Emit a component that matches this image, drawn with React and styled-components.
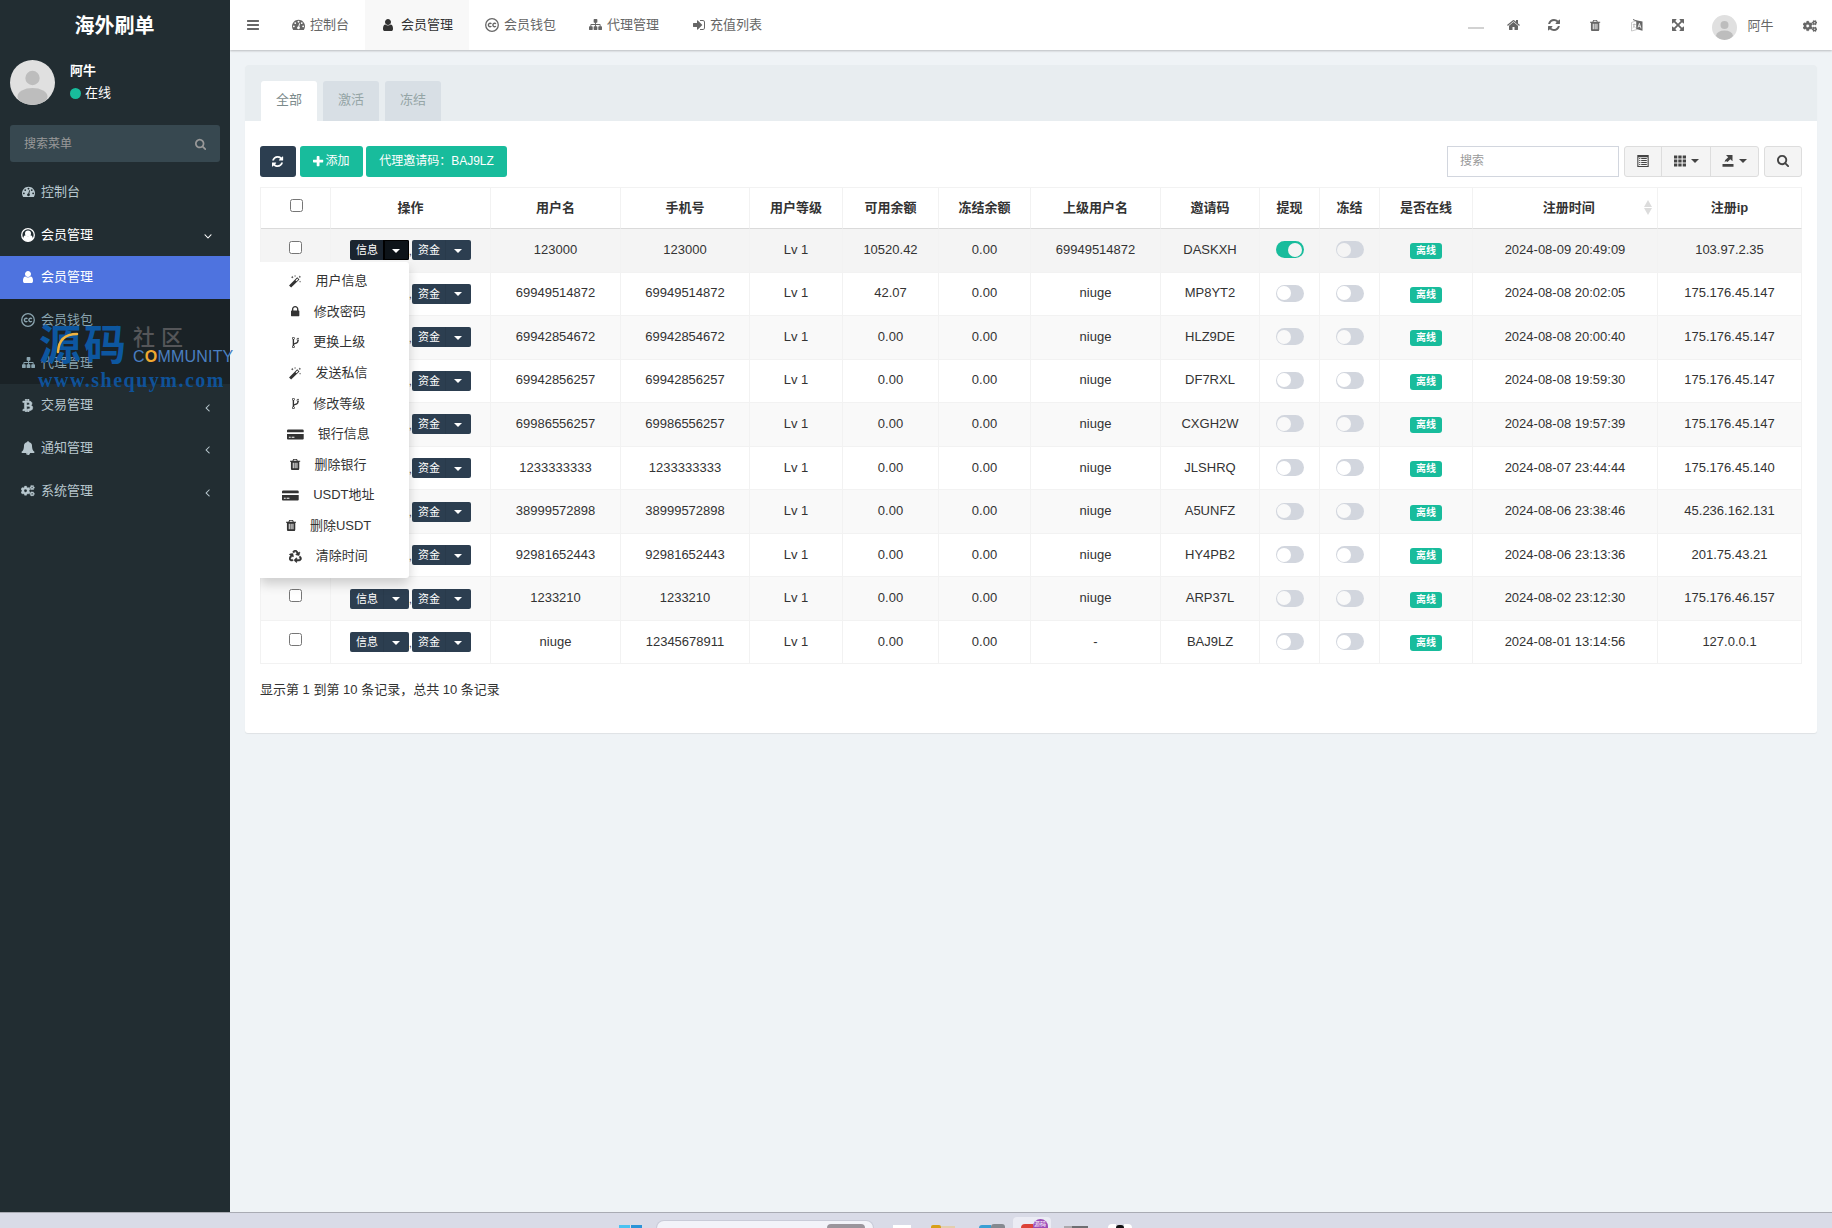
import React from 'react';
import styled, { createGlobalStyle, css } from 'styled-components';
import { FaRecycle, FaCogs, FaBtc } from 'react-icons/fa';

const Global = createGlobalStyle`
  * { box-sizing: border-box; }
  body {
    margin: 0;
    overflow: hidden;
    background: #eff3f6;
    color: #333;
    font: 13px/18px "Liberation Sans", "Noto Sans CJK SC", sans-serif;
  }
`;

/* ---------- icons ---------- */
const PATHS = {
  dashboard: [1792, 'M384 1152q0-53-37.500-90.500t-90.500-37.500-90.500 37.500-37.500 90.500 37.500 90.500 90.500 37.500 90.500-37.500 37.500-90.500zm192-448q0-53-37.500-90.500t-90.500-37.500-90.500 37.500-37.500 90.500 37.500 90.500 90.500 37.500 90.500-37.500 37.500-90.500zm428 481l101-382q6-26-7.500-48.500t-38.500-29.500-48 6.500-30 39.500l-101 382q-60 5-107 43.500t-63 98.500q-20 77 20 146t117 89 146-20 89-117q16-60-6-117t-72-91zm660-33q0-53-37.500-90.500t-90.500-37.500-90.500 37.500-37.500 90.500 37.500 90.500 90.500 37.500 90.500-37.500 37.500-90.500zm-640-640q0-53-37.500-90.500t-90.500-37.500-90.500 37.500-37.500 90.500 37.500 90.500 90.500 37.500 90.500-37.500 37.500-90.500zm448 192q0-53-37.500-90.500t-90.500-37.500-90.500 37.500-37.500 90.500 37.500 90.500 90.500 37.500 90.500-37.500 37.500-90.500zm320 448q0 261-141 483-19 29-54 29h-1402q-35 0-54-29-141-221-141-483 0-182 71-348t191-286 286-191 348-71 348 71 286 191 191 286 71 348z'],
  refresh: [1536, 'M1639 1056q0 5-1 7-64 268-268 434.500t-478 166.500q-146 0-282.500-55t-243.500-157l-129 129q-19 19-45 19t-45-19-19-45v-448q0-26 19-45t45-19h448q26 0 45 19t19 45-19 45l-137 137q71 66 161 102t187 36q134 0 250-65t186-179q11-17 53-117 8-23 30-23h192q13 0 22.500 9.500t9.500 22.500zm25-800v448q0 26-19 45t-45 19h-448q-26 0-45-19t-19-45 19-45l138-138q-148-137-349-137-134 0-250 65t-186 179q-11 17-53 117-8 23-30 23h-199q-13 0-22.500-9.500t-9.500-22.500v-7q65-268 270-434.500t480-166.500q146 0 284 55.500t245 156.500l130-129q19-19 45-19t45 19 19 45z'],
  search: [1664, 'M1216 832q0-185-131.500-316.500t-316.500-131.500-316.500 131.500-131.500 316.500 131.500 316.500 316.500 131.500 316.500-131.500 131.500-316.500zm512 832q0 52-38 90t-90 38q-54 0-90-38l-343-342q-179 124-399 124-143 0-273.500-55.500t-225-150-150-225-55.500-273.500 55.500-273.500 150-225 225-150 273.500-55.500 273.500 55.500 225 150 150 225 55.500 273.500q0 220-124 399l343 343q37 37 37 90z'],
  user: [1280, 'M1536 1399q0 109-62.500 187t-150.500 78h-854q-88 0-150.500-78t-62.500-187q0-85 8.500-160.500t31.500-152 58.500-131 94-89 134.500-34.500q131 128 313 128t313-128q76 0 134.500 34.500t94 89 58.500 131 31.500 152 8.500 160.500zm-256-887q0 159-112.500 271.500t-271.500 112.500-271.500-112.500-112.500-271.500 112.500-271.500 271.500-112.500 271.500 112.500 112.500 271.500z'],
  bars: [1536, 'M1664 1344v128q0 26-19 45t-45 19h-1408q-26 0-45-19t-19-45v-128q0-26 19-45t45-19h1408q26 0 45 19t19 45zm0-512v128q0 26-19 45t-45 19h-1408q-26 0-45-19t-19-45v-128q0-26 19-45t45-19h1408q26 0 45 19t19 45zm0-512v128q0 26-19 45t-45 19h-1408q-26 0-45-19t-19-45v-128q0-26 19-45t45-19h1408q26 0 45 19t19 45z'],
  angle: [700, 'M1203 544q0 13-10 23l-393 393 393 393q10 10 10 23t-10 23l-50 50q-10 10-23 10t-23-10l-466-466q-10-10-10-23t10-23l466-466q10-10 23-10t23 10l50 50q10 10 10 23z'],
  plus: [1408, 'M1600 736v192q0 40-28 68t-68 28h-416v416q0 40-28 68t-68 28h-192q-40 0-68-28t-28-68v-416h-416q-40 0-68-28t-28-68v-192q0-40 28-68t68-28h416v-416q0-40 28-68t68-28h192q40 0 68 28t28 68v416h416q40 0 68 28t28 68z'],
  home: [1664, 'M1472 992v480q0 26-19 45t-45 19h-384v-384h-256v384h-384q-26 0-45-19t-19-45v-480q0-1 .5-3t.5-3l575-474 575 474q1 2 1 6zm223-69l-62 74q-8 9-21 11h-3q-13 0-21-7l-692-577-692 577q-12 8-24 7-13-2-21-11l-62-74q-8-10-7-23.500t11-21.500l719-599q32-26 76-26t76 26l244 204v-195q0-14 9-23t23-9h192q14 0 23 9t9 23v408l219 182q10 8 11 21.500t-7 23.500z'],
  lock: [1152, 'M640 768h512v-192q0-106-75-181t-181-75-181 75-75 181v192zm832 96v576q0 40-28 68t-68 28h-960q-40 0-68-28t-28-68v-576q0-40 28-68t68-28h32v-192q0-184 132-316t316-132 316 132 132 316v192h32q40 0 68 28t28 68z'],
  trash: [1408, 'M704 1376v-704q0-14-9-23t-23-9h-64q-14 0-23 9t-9 23v704q0 14 9 23t23 9h64q14 0 23-9t9-23zm256 0v-704q0-14-9-23t-23-9h-64q-14 0-23 9t-9 23v704q0 14 9 23t23 9h64q14 0 23-9t9-23zm256 0v-704q0-14-9-23t-23-9h-64q-14 0-23 9t-9 23v704q0 14 9 23t23 9h64q14 0 23-9t9-23zm-544-992h448l-48-117q-7-9-17-11h-317q-10 2-17 11zm928 32v64q0 14-9 23t-23 9h-96v948q0 83-47 143.500t-113 60.500h-832q-66 0-113-58.500t-47-141.500v-952h-96q-14 0-23-9t-9-23v-64q0-14 9-23t23-9h309l70-167q15-37 54-63t79-26h320q40 0 79 26t54 63l70 167h309q14 0 23 9t9 23z'],
  expand: [1536, 'M1411 541l-355 355 355 355 144-144q29-31 70-14 39 17 39 59v448q0 26-19 45t-45 19h-448q-42 0-59-40-17-39 14-69l144-144-355-355-355 355 144 144q31 30 14 69-17 40-59 40h-448q-26 0-45-19t-19-45v-448q0-42 40-59 39-17 69 14l144 144 355-355-355-355-144 144q-19 19-45 19-12 0-24-5-40-17-40-59v-448q0-26 19-45t45-19h448q42 0 59 40 17 39-14 69l-144 144 355 355 355-355-144-144q-31-30-14-69 17-40 59-40h448q26 0 45 19t19 45v448q0 42-39 59-13 5-25 5-26 0-45-19z'],
  signin: [1536, 'M1312 896q0 26-19 45l-544 544q-19 19-45 19t-45-19-19-45v-288h-448q-26 0-45-19t-19-45v-384q0-26 19-45t45-19h448v-288q0-26 19-45t45-19 45 19l544 544q19 19 19 45zm352-352v704q0 119-84.500 203.500t-203.500 84.500h-320q-13 0-22.500-9.500t-9.500-22.500q0-4-1-20t-.5-26.500 3-23.500 10-19.500 20.500-6.500h320q66 0 113-47t47-113v-704q0-66-47-113t-113-47h-312l-11.500-1-11.500-3-8-5.500-7-9-2-13.500q0-4-1-20t-.5-26.500 3-23.500 10-19.500 20.500-6.500h320q119 0 203.500 84.500t84.500 203.500z'],
  sitemap: [1792, 'M1792 1248v320q0 40-28 68t-68 28h-320q-40 0-68-28t-28-68v-320q0-40 28-68t68-28h96v-192h-512v192h96q40 0 68 28t28 68v320q0 40-28 68t-68 28h-320q-40 0-68-28t-28-68v-320q0-40 28-68t68-28h96v-192h-512v192h96q40 0 68 28t28 68v320q0 40-28 68t-68 28h-320q-40 0-68-28t-28-68v-320q0-40 28-68t68-28h96v-192q0-52 38-90t90-38h512v-192h-96q-40 0-68-28t-28-68v-320q0-40 28-68t68-28h320q40 0 68 28t28 68v320q0 40-28 68t-68 28h-96v192h512q52 0 90 38t38 90v192h96q40 0 68 28t28 68z'],
  fork: [1024, 'M672 1472q0-40-28-68t-68-28-68 28-28 68 28 68 68 28 68-28 28-68zm0-1152q0-40-28-68t-68-28-68 28-28 68 28 68 68 28 68-28 28-68zm640 128q0-40-28-68t-68-28-68 28-28 68 28 68 68 28 68-28 28-68zm96 0q0 52-26 96.500t-70 69.500q-2 287-226 414-67 38-203 81-128 40-169.500 71t-41.500 100v26q44 25 70 69.500t26 96.500q0 80-56 136t-136 56-136-56-56-136q0-52 26-96.500t70-69.500v-820q-44-25-70-69.500t-26-96.500q0-80 56-136t136-56 136 56 56 136q0 52-26 96.500t-70 69.500v497q54-26 154-57 55-17 87.500-29.500t70.500-31 59-39.500 40.500-51 28-69.500 8.500-91.500q-44-25-70-69.500t-26-96.500q0-80 56-136t136-56 136 56 56 136z'],
  card: [2304, 'M-256 1440v-608h2304v608q0 66-47 113t-113 47h-1984q-66 0-113-47t-47-113zm640-224v128h384v-128zm-384 0v128h256v-128zm1888-1024q66 0 113 47t47 113v224h-2304v-224q0-66 47-113t113-47z'],
  bell: [1792, 'M912 1696q0-16-16-16-59 0-101.500-42.500t-42.500-101.500q0-16-16-16t-16 16q0 73 51.500 124.500t124.500 51.500q16 0 16-16zm816-288q0 52-38 90t-90 38h-448q0 106-75 181t-181 75-181-75-75-181h-448q-52 0-90-38t-38-90q50-42 91-88t85-119.500 74.500-158.500 50-206 19.500-260q0-152 117-282.500t307-158.500q-8-19-8-39 0-40 28-68t68-28 68 28 28 68q0 20-8 39 190 28 307 158.500t117 282.500q0 139 19.500 260t50 206 74.500 158.500 85 119.500 91 88z'],
};

const Svg = styled.svg`
  display: block;
  flex: none;
  fill: currentColor;
`;

function Drawn({ name, size }) {
  if (name === 'cc')
    return (
      <Svg width={size} height={size} viewBox="0 0 14 14">
        <circle cx="7" cy="7" r="6.300" fill="none" stroke="currentColor" strokeWidth="1.300" />
        <path d="M6.400 5.900A1.700 1.700 0 1 0 6.400 8.100M10.900 5.900A1.700 1.700 0 1 0 10.900 8.100" fill="none" stroke="currentColor" strokeWidth="1.400" />
      </Svg>
    );
  if (name === 'usercircle')
    return (
      <Svg width={size} height={size} viewBox="0 0 14 14">
        <circle cx="7" cy="7" r="6.300" fill="none" stroke="currentColor" strokeWidth="1.300" />
        <circle cx="7" cy="5.400" r="3" />
        <path d="M2 11q.5-3.600 2.600-3.800Q7 9.200 9.400 7.200q2.100.2 2.600 3.800Q9.800 13.400 7 13.400T2 11z" />
      </Svg>
    );
  if (name === 'magic')
    return (
      <Svg width={size * 0.93} height={size} viewBox="0 0 12 13">
        <path d="M8.200 2.300l2.200 2.200-8.300 8.100L0 10.500zM8.300 3.500L6.500 5.300l.9.900 1.800-1.800z" fillRule="evenodd" />
        <path d="M3.200.8l.4 1 1 .4-1 .4-.4 1-.4-1-1-.4 1-.4zM6 0l.3.700.7.300-.7.300L6 2l-.3-.7L5 1l.7-.3zM10.800.6l.4.900.8.400-.8.400-.4.800-.4-.8-.8-.4.8-.4zM11 5.800l.3.700.7.300-.7.300-.3.700-.3-.7-.7-.3.700-.3z" />
      </Svg>
    );
  if (name === 'language')
    return (
      <Svg width={size} height={size} viewBox="0 0 12 13">
        <path d="M1 3.500l5.500-2v9L1 12z" fill="#fff" stroke="#bbb" strokeWidth=".8" />
        <path d="M2.300 5.500h3M3.700 4.500c0 3-.6 4-1.500 4.500M3 6.500c.6 1.500 1.200 2 2.200 2.300" fill="none" stroke="#aaa" strokeWidth=".7" />
        <path d="M2.500 0l3 1.200L12 2.400v9.400L5.800 10V2.500L2.500 1z" />
        <path d="M7.500 8.500L8.900 4.400l1.600 5M8 7.300h2" fill="none" stroke="#fff" strokeWidth=".8" />
      </Svg>
    );
  if (name === 'list')
    return (
      <Svg width={size} height={size} viewBox="0 0 12 12">
        <path fillRule="evenodd" d="M.3 0h11.400v12H.3zM1.400 2.200v8.700h9.200V2.200zM2.200 3h1.100v1H2.200zM4.200 3h5.600v1H4.200zM2.200 5h1.100v1H2.200zM4.200 5h5.600v1H4.200zM2.200 7h1.100v1H2.200zM4.200 7h5.600v1H4.200zM2.200 9h1.100v1H2.200zM4.200 9h5.600v1H4.200z" />
      </Svg>
    );
  if (name === 'grid')
    return (
      <Svg width={size} height={size} viewBox="0 0 12 12">
        <path d="M0 .5h3.300v3H0zM4.300.5h3.300v3H4.300zM8.700.5H12v3H8.700zM0 4.500h3.300v3H0zM4.300 4.500h3.300v3H4.300zM8.700 4.500H12v3H8.700zM0 8.500h3.300v3H0zM4.300 8.500h3.300v3H4.300zM8.700 8.500H12v3H8.700z" />
      </Svg>
    );
  if (name === 'export')
    return (
      <Svg width={size} height={size} viewBox="0 0 12 12">
        <path d="M.5 9h11v2.800H.5zM4 0h6.500v6.300L8.300 4.200 5.500 7Q4 5.500 2.500 7.500 3 4.300 6.200 2.200z" />
      </Svg>
    );
  const [w, d] = PATHS[name];
  return (
    <Svg width={(size * w) / 1792} height={size} viewBox={`${(1792 - w) / 2} 0 ${w} 1792`}>
      <path d={d} />
    </Svg>
  );
}

const PACKED = { recycle: FaRecycle, cogs: FaCogs, btc: FaBtc };

function Icon({ name, size = 13 }) {
  const P = PACKED[name];
  return P ? <P size={size - 0.5} stroke="currentColor" strokeWidth={name === 'cogs' ? 14 : 22} /> : <Drawn name={name} size={size} />;
}

const Caret = styled.i`
  border: 4px solid transparent;
  border-top-color: currentColor;
  border-bottom: 0;
`;

function Avatar({ size }) {
  return (
    <Svg width={size} height={size} viewBox="0 0 45 45">
      <clipPath id={`round${size}`}><circle cx="22.500" cy="22.500" r="22.500" /></clipPath>
      <g clipPath={`url(#round${size})`}>
        <rect width="45" height="45" fill="#e0e0e0" />
        <circle cx="22.500" cy="18" r="7.200" fill="#bdbdbd" />
        <ellipse cx="22.500" cy="36.500" rx="15" ry="8.500" fill="#bdbdbd" />
      </g>
    </Svg>
  );
}

/* ---------- frame ---------- */
const Screen = styled.div`
  display: flex;
  flex-direction: column;
  height: 1228px;
  width: 1832px;
`;
const Body = styled.div`
  display: flex;
  height: 1212px;
`;

/* ---------- sidebar ---------- */
const Sidebar = styled.aside`
  position: relative;
  width: 230px;
  background: #222d32;
  color: #b8c7ce;
`;
const Logo = styled.h1`
  margin: 0;
  height: 50px;
  padding-right: 1px;
  font-size: 20px;
  line-height: 52px;
  text-align: center;
  color: #fff;
`;
const Profile = styled.div`
  display: flex;
  gap: 15px;
  padding: 10px 10px 0;
  height: 75px;
  color: #fff;
`;
const ProfileText = styled.div`
  display: flex;
  flex-direction: column;
  gap: 4px;
  padding-top: 2px;
`;
const Status = styled.span`
  display: flex;
  align-items: center;
  gap: 4px;
  &::before {
    content: '';
    width: 11px;
    height: 11px;
    border-radius: 50%;
    background: #18bc9c;
  }
`;
const MenuSearch = styled.div`
  display: flex;
  align-items: center;
  justify-content: space-between;
  margin: 0 10px 9px;
  padding: 0 14px;
  height: 37px;
  border-radius: 3px;
  background: #374850;
  color: #999;
  font-size: 12px;
`;
const MenuItem = styled.a`
  display: flex;
  align-items: center;
  height: 42.700px;
  padding: 0 15px 1px 20px;
  color: ${p => (p.$on ? '#fff' : p.$sub ? '#8aa4af' : '#b8c7ce')};
  background: ${p => (p.$active ? '#4e73df' : p.$sub ? '#1a2226' : 'transparent')};
`;
const MenuIcon = styled.span`
  display: flex;
  justify-content: center;
  width: 16px;
  margin-right: 5px;
`;
const Arrow = styled.span`
  margin: 4px 4.500px 0 auto;
  transform: rotate(${p => (p.$open ? '-90deg' : '0deg')});
`;

/* ---------- watermark ---------- */
const Mark = styled.div`
  position: absolute;
  z-index: 5;
  left: 38px;
  top: 322px;
  width: 200px;
  height: 70px;
  white-space: nowrap;
`;
const MarkText = styled.span`
  position: absolute;
  left: ${p => p.$x}px;
  top: ${p => p.$y}px;
  line-height: 1;
  color: ${p => p.$color};
  font-size: ${p => p.$size}px;
  font-weight: ${p => p.$weight || 400};
  letter-spacing: ${p => p.$gap || 0}px;
  font-family: ${p => (p.$serif ? '"Liberation Serif", serif' : '"Liberation Sans", "Noto Sans CJK SC", sans-serif')};
  b { color: #f0a830; }
`;
const Swoosh = styled.svg`
  position: absolute;
  left: 17px;
  top: 9px;
`;

/* ---------- header ---------- */
const Main = styled.main`
  flex: 1;
  display: flex;
  flex-direction: column;
  background: #eff3f6;
`;
const Header = styled.header`
  display: flex;
  height: 50px;
  background: #fff;
  color: #666;
  box-shadow: 0 1px 2px rgba(0, 0, 0, 0.22);
`;
const Burger = styled.div`
  display: flex;
  align-items: center;
  width: 46px;
  padding: 0 0 1px 17px;
`;
const NavTab = styled.a`
  display: flex;
  align-items: center;
  gap: 5px;
  height: 50px;
  padding: 0 16px 1px 15px;
  margin-right: ${p => p.$gap || 0}px;
  background: ${p => (p.$active ? '#f8f8f8' : 'transparent')};
  color: ${p => (p.$active ? '#333' : '#666')};
`;
const NavIcon = styled.span`
  display: flex;
  justify-content: center;
  width: ${p => p.$w || 14}px;
`;
const Tools = styled.div`
  display: flex;
  align-items: center;
  margin-left: auto;
`;
const Tool = styled.span`
  display: flex;
  justify-content: center;
  width: 41.200px;
`;
const Dash = styled.span`
  width: 16px;
  height: 2px;
  margin: 6px 9px 0 0;
  background: #d2d2d2;
`;
const Account = styled.span`
  display: flex;
  align-items: center;
  gap: 10px;
  margin: 5px 29px 0 14px;
  span { padding-bottom: 4px; }
`;
const GearBox = styled.span`
  display: flex;
  margin: 2px 15.500px 0 0;
`;

/* ---------- panel ---------- */
const Panel = styled.section`
  width: 1572px;
  height: 668px;
  margin: 15px 0 0 15px;
  background: #fff;
  border-radius: 3px;
  box-shadow: 0 1px 1px rgba(0, 0, 0, 0.07);
`;
const PanelHead = styled.div`
  display: flex;
  align-items: flex-end;
  gap: 6px;
  height: 56px;
  padding-left: 16px;
  background: #e8edf0;
  border-radius: 3px 3px 0 0;
`;
const PanelTab = styled.div`
  width: 56px;
  height: 40px;
  line-height: 37px;
  text-align: center;
  border-radius: 3px 3px 0 0;
  background: ${p => (p.$active ? '#fff' : '#d8dfe5')};
  color: ${p => (p.$active ? '#7b8a8b' : '#95a5a6')};
`;
const PanelBody = styled.div`
  padding: 25px 15px 0;
`;
const Toolbar = styled.div`
  display: flex;
  height: 31px;
  margin-bottom: 10px;
  font-size: 12px;
`;
const Button = styled.button`
  display: flex;
  align-items: center;
  justify-content: center;
  gap: 2px;
  width: ${p => p.$w}px;
  margin: 0 ${p => p.$gap || 0}px 0 0;
  padding: 0 0 1px;
  border: 0;
  border-radius: 3px;
  background: ${p => (p.$dark ? '#2c3e50' : '#18bc9c')};
  color: #fff;
  font: inherit;
`;
const TableSearch = styled.div`
  width: 172px;
  margin: 0 5px 0 auto;
  padding: 0 12px;
  border: 1px solid #d2d6de;
  line-height: 29px;
  color: #999;
`;
const Group = styled.div`
  display: flex;
  margin-right: ${p => p.$gap || 0}px;
  border: 1px solid #ddd;
  border-radius: 3px;
  background: #f4f4f4;
  color: #444;
`;
const GroupItem = styled.span`
  display: flex;
  align-items: center;
  justify-content: center;
  gap: 5px;
  width: ${p => p.$w}px;
  padding-bottom: 2px;
  & + & { border-left: 1px solid #ddd; }
`;

/* ---------- table ---------- */
const TableWrap = styled.div`
  position: relative;
`;
const Grid = styled.div`
  width: 1542px;
  border: 1px solid #f2f2f2;
  border-width: 1px 0 0 1px;
`;
const Row = styled.div`
  display: grid;
  grid-template-columns: 70px 160px 130px 129px 93px 96px 92px 130px 99px 60px 60px 93px 185px 144px;
  height: ${p => (p.$head ? 41 : 43.55)}px;
  background: ${p => p.$bg || '#fff'};
  font-weight: ${p => (p.$head ? 700 : 400)};
`;
const Cell = styled.div`
  display: flex;
  align-items: center;
  justify-content: center;
  border-right: 1px solid #f2f2f2;
  border-bottom: 1px solid ${p => (p.$head ? '#dadada' : '#f2f2f2')};
  padding: 0 0 1px 0;
`;
const Check = styled.input`
  width: 13px;
  height: 13px;
  margin: 0 0 5px ${p => (p.$head ? 2 : 0)}px;
`;
const Split = styled.span`
  display: flex;
  height: 20px;
  margin-top: 1px;
  border-radius: 2px;
  overflow: hidden;
  background: ${p => (p.$open ? '#1a242f' : '#2c3e50')};
  color: #fff;
  font-size: 11px;
  line-height: 20px;
`;
const SplitText = styled.span`
  width: 33px;
  padding-left: 6px;
`;
const SplitCaret = styled.span`
  display: flex;
  align-items: center;
  justify-content: center;
  width: 26px;
  padding: 1px 2px 0 0;
  border-left: 1px solid ${p => (p.$open ? '#000' : '#293a4b')};
  ${p => p.$open && css`background: #0d1318; box-shadow: inset 0 0 0 1px #000;`}
`;
const Dot = styled.span`
  width: 3px;
  height: 20px;
  font-size: 10px;
  line-height: 24px;
  overflow: hidden;
`;
const Switch = styled.span`
  display: flex;
  justify-content: ${p => (p.$on ? 'flex-end' : 'flex-start')};
  width: 28px;
  height: 17px;
  padding: 1.500px;
  border-radius: 9px;
  background: ${p => (p.$on ? '#18bc9c' : '#d2d6de')};
  &::before {
    content: '';
    width: 14px;
    height: 14px;
    border-radius: 50%;
    background: ${p => p.$knob};
  }
`;
const Label = styled.span`
  width: 32px;
  height: 16px;
  margin-top: 3px;
  border-radius: 3px;
  background: #18bc9c;
  color: #fff;
  font-size: 10px;
  font-weight: 700;
  line-height: 15px;
  text-align: center;
`;
const SortHead = styled.span`
  display: flex;
  align-items: center;
  width: 100%;
  span { flex: 1; text-align: center; padding-left: 21px; }
`;
const SortMark = styled.svg`
  margin-right: 5.500px;
  fill: #dcdcdc;
`;
const Summary = styled.div`
  margin-top: 17px;
`;

/* ---------- row menu ---------- */
const MenuClip = styled.div`
  position: absolute;
  z-index: 3;
  left: 0;
  top: 75px;
  width: 180px;
  height: 340px;
  overflow: hidden;
`;
const Menu = styled.div`
  width: 149px;
  height: 316px;
  padding: 4px 12px 0 0;
  border-radius: 0 3px 3px 0;
  background: #fff;
  box-shadow: 0 6px 12px rgba(0, 0, 0, 0.18);
`;
const MenuLine = styled.div`
  display: flex;
  align-items: center;
  justify-content: center;
  gap: 14px;
  height: 30.580px;
`;

/* ---------- taskbar ---------- */
const Taskbar = styled.footer`
  display: flex;
  align-items: flex-end;
  height: 16px;
  padding-left: 619px;
  border-top: 1px solid #a9abb3;
  background: #d9dbe7;
  overflow: hidden;
`;
const Tile = styled.span`
  width: ${p => p.$w}px;
  height: ${p => p.$h}px;
  margin-left: ${p => p.$ml || 0}px;
  border-radius: ${p => p.$r || '0'};
  background: ${p => p.$bg};
`;
const SearchPill = styled.span`
  display: flex;
  align-items: flex-end;
  justify-content: flex-end;
  width: 216px;
  height: 7px;
  margin-left: 15px;
  padding-right: 8px;
  border-radius: 14px 14px 0 0;
  background: #f2f3f9;
  box-shadow: 0 0 0 1px #c9cbd8;
`;
const ActiveTile = styled.span`
  display: flex;
  align-items: flex-end;
  justify-content: center;
  width: 38px;
  height: 11px;
  margin-left: 8px;
  padding-left: 4px;
  border-radius: 4px 4px 0 0;
  background: #ebecf4;
`;
const Count = styled.span`
  width: 15px;
  height: 9px;
  border-radius: 8px 8px 0 0;
  background: #9b4bb8;
  color: #fff;
  font-size: 6px;
  line-height: 11px;
  text-align: center;
  overflow: hidden;
`;

/* ---------- data ---------- */
const HEADS = ['操作', '用户名', '手机号', '用户等级', '可用余额', '冻结余额', '上级用户名', '邀请码', '提现', '冻结', '是否在线', '注册时间', '注册ip'];
const ROWS = [
  ['123000', '123000', '10520.42', '69949514872', 'DASKXH', '2024-08-09 20:49:09', '103.97.2.35'],
  ['69949514872', '69949514872', '42.07', 'niuge', 'MP8YT2', '2024-08-08 20:02:05', '175.176.45.147'],
  ['69942854672', '69942854672', '0.00', 'niuge', 'HLZ9DE', '2024-08-08 20:00:40', '175.176.45.147'],
  ['69942856257', '69942856257', '0.00', 'niuge', 'DF7RXL', '2024-08-08 19:59:30', '175.176.45.147'],
  ['69986556257', '69986556257', '0.00', 'niuge', 'CXGH2W', '2024-08-08 19:57:39', '175.176.45.147'],
  ['1233333333', '1233333333', '0.00', 'niuge', 'JLSHRQ', '2024-08-07 23:44:44', '175.176.45.140'],
  ['38999572898', '38999572898', '0.00', 'niuge', 'A5UNFZ', '2024-08-06 23:38:46', '45.236.162.131'],
  ['92981652443', '92981652443', '0.00', 'niuge', 'HY4PB2', '2024-08-06 23:13:36', '201.75.43.21'],
  ['1233210', '1233210', '0.00', 'niuge', 'ARP37L', '2024-08-02 23:12:30', '175.176.46.157'],
  ['niuge', '12345678911', '0.00', '-', 'BAJ9LZ', '2024-08-01 13:14:56', '127.0.0.1'],
];
const ACTIONS = [
  ['magic', '用户信息'], ['lock', '修改密码'], ['fork', '更换上级'], ['magic', '发送私信'], ['fork', '修改等级'],
  ['card', '银行信息'], ['trash', '删除银行'], ['card', 'USDT地址'], ['trash', '删除USDT'], ['recycle', '清除时间'],
];
const SIDE = [
  { icon: 'dashboard', text: '控制台' },
  { icon: 'usercircle', text: '会员管理', on: true, arrow: 'open' },
  { icon: 'user', text: '会员管理', on: true, active: true },
  { icon: 'cc', text: '会员钱包', sub: true },
  { icon: 'sitemap', text: '代理管理', sub: true },
  { icon: 'btc', text: '交易管理', arrow: 'shut' },
  { icon: 'bell', text: '通知管理', arrow: 'shut' },
  { icon: 'cogs', text: '系统管理', arrow: 'shut' },
];

function SplitButton({ text, open }) {
  return (
    <Split $open={open}>
      <SplitText>{text}</SplitText>
      <SplitCaret $open={open}><Caret /></SplitCaret>
    </Split>
  );
}

function DataRow({ row, index }) {
  const [name, phone, money, parent, code, time, ip] = row;
  const bg = index === 0 ? '#f4f4f4' : index % 2 === 0 ? '#f9f9f9' : '#fff';
  return (
    <Row $bg={bg}>
      <Cell><Check type="checkbox" /></Cell>
      <Cell>
        <SplitButton text="信息" open={index === 0} />
        <Dot>,</Dot>
        <SplitButton text="资金" />
      </Cell>
      <Cell>{name}</Cell>
      <Cell>{phone}</Cell>
      <Cell>Lv 1</Cell>
      <Cell>{money}</Cell>
      <Cell>0.00</Cell>
      <Cell>{parent}</Cell>
      <Cell>{code}</Cell>
      <Cell><Switch $on={index === 0} $knob={bg} /></Cell>
      <Cell><Switch $knob={bg} /></Cell>
      <Cell><Label>离线</Label></Cell>
      <Cell>{time}</Cell>
      <Cell>{ip}</Cell>
    </Row>
  );
}

export default function App() {
  return (
    <Screen>
      <Global />
      <Body>
        <Sidebar>
          <Logo>海外刷单</Logo>
          <Profile>
            <Avatar size={45} />
            <ProfileText>
              <b>阿牛</b>
              <Status>在线</Status>
            </ProfileText>
          </Profile>
          <MenuSearch>搜索菜单<Icon name="search" size={12} /></MenuSearch>
          {SIDE.map((m, i) => (
            <MenuItem key={i} $on={m.on} $active={m.active} $sub={m.sub}>
              <MenuIcon><Icon name={m.icon} size={m.icon === 'dashboard' || m.icon === 'sitemap' ? 13 : 14} /></MenuIcon>
              {m.text}
              {m.arrow && <Arrow $open={m.arrow === 'open'}><Icon name="angle" size={13} /></Arrow>}
            </MenuItem>
          ))}
          <Mark>
            <MarkText $x={1} $y={3} $size={42} $weight={700} $color="#0d57a0" $gap={3}>源码</MarkText>
            <MarkText $x={95} $y={5} $size={22} $weight={500} $color="#555659" $gap={6}>社区</MarkText>
            <MarkText $x={95} $y={27} $size={16} $color="#4a7fc0" $gap={0.2}>C<b>O</b>MMUNITY</MarkText>
            <MarkText $x={0} $y={48} $size={20} $weight={700} $color="#0f5299" $gap={1.5} $serif>www.shequym.com</MarkText>
            <Swoosh width="24" height="24" viewBox="0 0 24 24">
              <path d="M22 3Q4 3 3 21" fill="none" stroke="#f0b440" strokeWidth="2.500" strokeLinecap="round" />
            </Swoosh>
          </Mark>
        </Sidebar>
        <Main>
          <Header>
            <Burger><Icon name="bars" size={14} /></Burger>
            <NavTab><NavIcon><Icon name="dashboard" /></NavIcon>控制台</NavTab>
            <NavTab $active $gap={1}><NavIcon $w={16}><Icon name="user" size={14} /></NavIcon>会员管理</NavTab>
            <NavTab $gap={1}><NavIcon><Icon name="cc" size={14} /></NavIcon>会员钱包</NavTab>
            <NavTab $gap={2}><NavIcon><Icon name="sitemap" /></NavIcon>代理管理</NavTab>
            <NavTab><NavIcon $w={13}><Icon name="signin" size={14} /></NavIcon>充值列表</NavTab>
            <Tools>
              <Dash />
              <Tool><Icon name="home" size={14} /></Tool>
              <Tool><Icon name="refresh" size={14} /></Tool>
              <Tool><Icon name="trash" /></Tool>
              <Tool><Icon name="language" /></Tool>
              <Tool><Icon name="expand" size={14} /></Tool>
              <Account><Avatar size={25} /><span>阿牛</span></Account>
              <GearBox><Icon name="cogs" size={14.5} /></GearBox>
            </Tools>
          </Header>
          <Panel>
            <PanelHead>
              <PanelTab $active>全部</PanelTab>
              <PanelTab>激活</PanelTab>
              <PanelTab>冻结</PanelTab>
            </PanelHead>
            <PanelBody>
              <Toolbar>
                <Button $w={36} $gap={4} $dark><Icon name="refresh" size={13} /></Button>
                <Button $w={63} $gap={3}><Icon name="plus" size={13} />添加</Button>
                <Button $w={141}>代理邀请码：BAJ9LZ</Button>
                <TableSearch>搜索</TableSearch>
                <Group $gap={5}>
                  <GroupItem $w={36}><Icon name="list" size={12} /></GroupItem>
                  <GroupItem $w={49}><Icon name="grid" size={12} /><Caret /></GroupItem>
                  <GroupItem $w={48}><Icon name="export" size={12} /><Caret /></GroupItem>
                </Group>
                <Group><GroupItem $w={36}><Icon name="search" size={13} /></GroupItem></Group>
              </Toolbar>
              <TableWrap>
                <Grid>
                  <Row $head>
                    <Cell $head><Check type="checkbox" $head /></Cell>
                    {HEADS.map(h => (
                      <Cell $head key={h}>
                        {h === '注册时间' ? (
                          <SortHead>
                            <span>{h}</span>
                            <SortMark width="8" height="15" viewBox="0 0 8 15"><path d="M4 0l4 7H0zM4 15L0 8h8z" /></SortMark>
                          </SortHead>
                        ) : h}
                      </Cell>
                    ))}
                  </Row>
                  {ROWS.map((r, i) => <DataRow key={i} row={r} index={i} />)}
                </Grid>
                <MenuClip>
                  <Menu>
                    {ACTIONS.map(([icon, text], i) => (
                      <MenuLine key={i}><Icon name={icon} size={13} />{text}</MenuLine>
                    ))}
                  </Menu>
                </MenuClip>
              </TableWrap>
              <Summary>显示第 1 到第 10 条记录，总共 10 条记录</Summary>
            </PanelBody>
          </Panel>
        </Main>
      </Body>
      <Taskbar>
        <Tile $w={11} $h={3} $bg="#4cc2f1" />
        <Tile $w={11} $h={3} $ml={1} $bg="#2b94d8" />
        <SearchPill><Tile $w={38} $h={4} $r="19px 19px 0 0" $bg="#9a959c" /></SearchPill>
        <Tile $w={18} $h={3} $ml={20} $bg="#fff" />
        <Tile $w={10} $h={3} $ml={20} $r="2px 2px 0 0" $bg="#d8a018" />
        <Tile $w={14} $h={2} $bg="#e3cfae" />
        <Tile $w={12} $h={3} $ml={24} $r="10px 0 0 0" $bg="#3a9fd4" />
        <Tile $w={14} $h={4} $r="3px 3px 0 0" $bg="#858990" />
        <ActiveTile>
          <Tile $w={12} $h={4} $r="10px 0 0 0" $bg="#dc4238" />
          <Count>源码</Count>
        </ActiveTile>
        <Tile $w={8} $h={2} $ml={13} $bg="#aaa9ad" />
        <Tile $w={16} $h={2} $bg="#6e6e72" />
        <Tile $w={8} $h={4} $ml={20} $r="4px 0 0 0" $bg="#fff" />
        <Tile $w={8} $h={3} $r="5px 5px 0 0" $bg="#111" />
        <Tile $w={8} $h={4} $r="0 4px 0 0" $bg="#fff" />
      </Taskbar>
    </Screen>
  );
}
